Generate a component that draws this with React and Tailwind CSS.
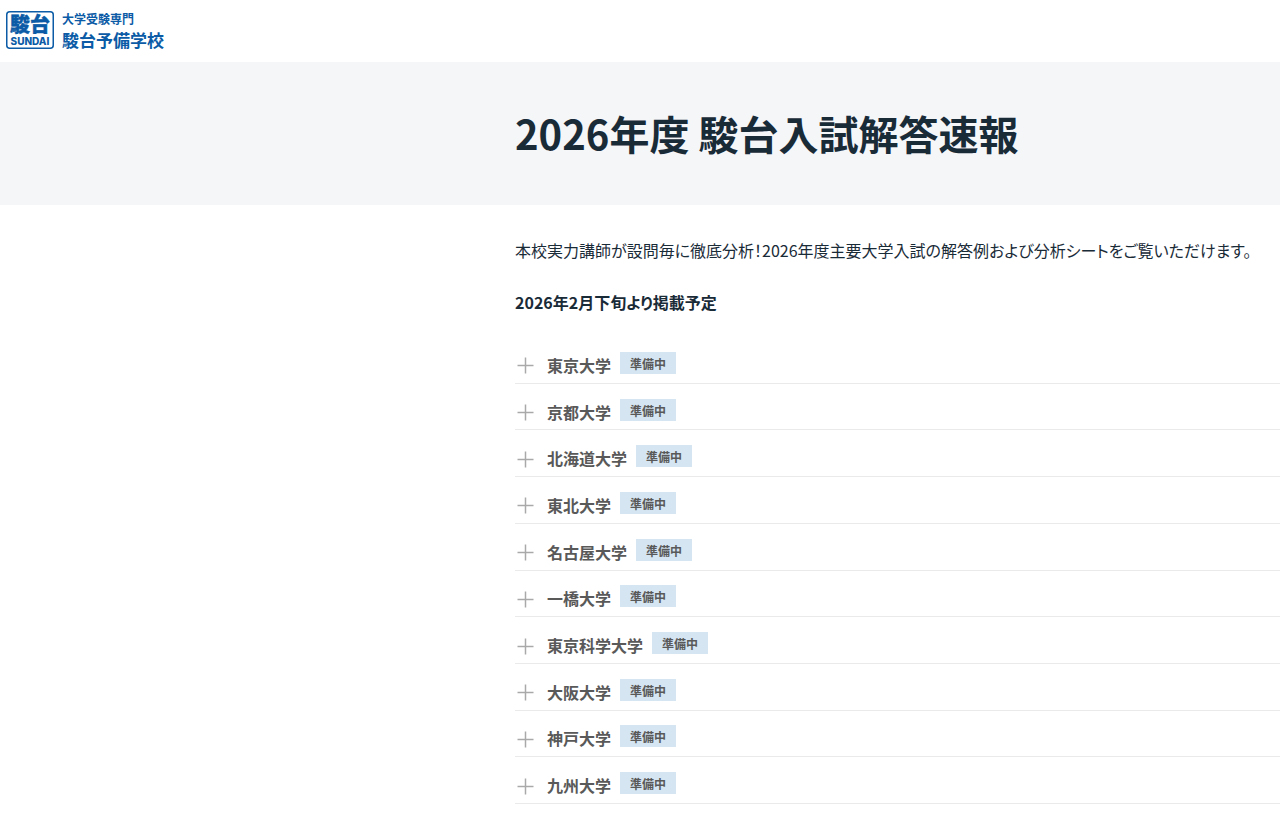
import React, { useState } from 'react';

const universities = [
    '東京大学',
    '京都大学',
    '北海道大学',
    '東北大学',
    '名古屋大学',
    '一橋大学',
    '東京科学大学',
    '大阪大学',
    '神戸大学',
    '九州大学'
];

const Logo = () => (
    <a href="#" className="flex items-center gap-2 text-[#0b5ba6]">
        <svg width="48" height="38" viewBox="0 0 48 38" role="img" aria-label="駿台 SUNDAI" className="overflow-visible">
            <rect x="0.75" y="0.75" width="46.5" height="36.5" rx="3" fill="none" stroke="currentColor" strokeWidth="1.5" />
            <text
                x="24"
                y="21"
                textAnchor="middle"
                fontSize="20"
                fontWeight="900"
                fill="currentColor"
                stroke="currentColor"
                strokeWidth="0.4"
            >
                駿台
            </text>
            <text
                x="24"
                y="34"
                textAnchor="middle"
                fontSize="10"
                fontWeight="800"
                fontFamily="Inter, sans-serif"
                fill="currentColor"
            >
                SUNDAI
            </text>
        </svg>
        <span className="flex flex-col pt-1 font-bold">
            <span className="text-[12px] leading-4">大学受験専門</span>
            <span className="text-[17px] leading-[26px]">駿台予備学校</span>
        </span>
    </a>
);

const UniversityRow = ({ name }) => {
    const [open, setOpen] = useState(false);

    return (
        <li className="flex flex-col border-b border-[#eaeaea]">
            <button
                type="button"
                aria-expanded={open}
                onClick={() => setOpen(prev => !prev)}
                className="flex flex-1 items-center pt-3 pl-0.5 text-left cursor-pointer"
            >
                <svg width="17" height="17" viewBox="0 0 17 17" stroke="#a9a9a9" strokeWidth="1.5" aria-hidden="true">
                    <path d="M0.5 8.5h16" />
                    {!open && <path d="M8.5 0.5v16" />}
                </svg>
                <span className="mb-0.5 ml-[13px] text-[16px] leading-6 font-bold text-[#595959]">{name}</span>
                <span className="mb-1.5 ml-[9px] bg-[#d5e5f2] px-2.5 pt-0.5 text-[12px] leading-5 font-bold text-[#595959]">
                    準備中
                </span>
            </button>
            {open && <p className="pl-8 pb-3 text-sm">ただいま準備中です。</p>}
        </li>
    );
};

const App = () => {
    return (
        <div
            lang="ja"
            className="min-h-screen overflow-x-hidden bg-white font-['Noto_Sans_CJK_JP',sans-serif] text-[#1a2b38] [font-feature-settings:'palt']"
        >
            <header className="flex h-[62px] items-center px-1.5 pb-0.5">
                <Logo />
            </header>
            <div className="bg-[#f4f6f8] py-10 pl-[515px]">
                <h1 className="text-[40px] leading-[63px] font-bold">2026年度 駿台入試解答速報</h1>
            </div>
            <main className="pt-8 pb-7 pl-[515px]">
                <p className="text-[16px] leading-[26px]">
                    本校実力講師が設問毎に徹底分析！2026年度主要大学入試の解答例および分析シートをご覧いただけます。
                </p>
                <p className="mt-[26px] text-[16px] leading-[26px] font-bold">2026年2月下旬より掲載予定</p>
                {/* 大学一覧 */}
                <ul className="mt-[22px] grid min-h-[467px] auto-rows-fr">
                    {universities.map(name => (
                        <UniversityRow key={name} name={name} />
                    ))}
                </ul>
            </main>
        </div>
    );
};

export default App;
